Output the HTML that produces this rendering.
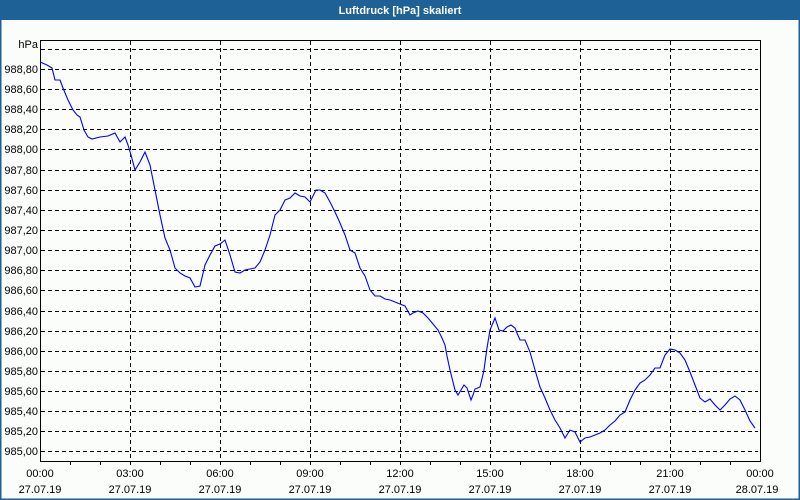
<!DOCTYPE html>
<html><head><meta charset="utf-8"><style>
html,body{margin:0;padding:0;width:800px;height:500px;overflow:hidden;background:#fbfdfb;}
svg{display:block;font-family:"Liberation Sans",Tahoma,sans-serif;}
</style></head><body>
<svg width="800" height="500" viewBox="0 0 800 500" xmlns="http://www.w3.org/2000/svg">
<rect x="0" y="0" width="800" height="500" fill="#fbfdfb"/>
<rect x="0.5" y="0.5" width="799" height="499" fill="none" stroke="#1e6196" stroke-width="2"/>
<rect x="0" y="0" width="800" height="20" fill="#1e6196"/>
<text x="400" y="14" fill="#fff" font-size="11" font-weight="bold" text-anchor="middle">Luftdruck [hPa] skaliert</text>
<g stroke="#000" stroke-width="1" stroke-dasharray="4,3" shape-rendering="crispEdges">
<line x1="41" y1="49.5" x2="758" y2="49.5"/>
<line x1="41" y1="69.5" x2="758" y2="69.5"/>
<line x1="41" y1="89.5" x2="758" y2="89.5"/>
<line x1="41" y1="109.5" x2="758" y2="109.5"/>
<line x1="41" y1="129.5" x2="758" y2="129.5"/>
<line x1="41" y1="149.5" x2="758" y2="149.5"/>
<line x1="41" y1="170.5" x2="758" y2="170.5"/>
<line x1="41" y1="190.5" x2="758" y2="190.5"/>
<line x1="41" y1="210.5" x2="758" y2="210.5"/>
<line x1="41" y1="230.5" x2="758" y2="230.5"/>
<line x1="41" y1="250.5" x2="758" y2="250.5"/>
<line x1="41" y1="270.5" x2="758" y2="270.5"/>
<line x1="41" y1="290.5" x2="758" y2="290.5"/>
<line x1="41" y1="311.5" x2="758" y2="311.5"/>
<line x1="41" y1="331.5" x2="758" y2="331.5"/>
<line x1="41" y1="351.5" x2="758" y2="351.5"/>
<line x1="41" y1="371.5" x2="758" y2="371.5"/>
<line x1="41" y1="391.5" x2="758" y2="391.5"/>
<line x1="41" y1="411.5" x2="758" y2="411.5"/>
<line x1="41" y1="431.5" x2="758" y2="431.5"/>
<line x1="41" y1="451.5" x2="758" y2="451.5"/>
<line x1="130.5" y1="41" x2="130.5" y2="460"/>
<line x1="220.5" y1="41" x2="220.5" y2="460"/>
<line x1="310.5" y1="41" x2="310.5" y2="460"/>
<line x1="400.5" y1="41" x2="400.5" y2="460"/>
<line x1="490.5" y1="41" x2="490.5" y2="460"/>
<line x1="580.5" y1="41" x2="580.5" y2="460"/>
<line x1="670.5" y1="41" x2="670.5" y2="460"/>
</g>
<rect x="40.5" y="40.5" width="720" height="421" fill="none" stroke="#000" shape-rendering="crispEdges"/>
<g stroke="#000" shape-rendering="crispEdges">
<line x1="70.5" y1="461" x2="70.5" y2="465"/><line x1="100.5" y1="461" x2="100.5" y2="465"/>
<line x1="160.5" y1="461" x2="160.5" y2="465"/><line x1="190.5" y1="461" x2="190.5" y2="465"/>
<line x1="250.5" y1="461" x2="250.5" y2="465"/><line x1="280.5" y1="461" x2="280.5" y2="465"/>
<line x1="340.5" y1="461" x2="340.5" y2="465"/><line x1="370.5" y1="461" x2="370.5" y2="465"/>
<line x1="430.5" y1="461" x2="430.5" y2="465"/><line x1="460.5" y1="461" x2="460.5" y2="465"/>
<line x1="520.5" y1="461" x2="520.5" y2="465"/><line x1="550.5" y1="461" x2="550.5" y2="465"/>
<line x1="610.5" y1="461" x2="610.5" y2="465"/><line x1="640.5" y1="461" x2="640.5" y2="465"/>
<line x1="700.5" y1="461" x2="700.5" y2="465"/><line x1="730.5" y1="461" x2="730.5" y2="465"/>
<line x1="130.5" y1="461" x2="130.5" y2="465"/><line x1="220.5" y1="461" x2="220.5" y2="465"/>
<line x1="310.5" y1="461" x2="310.5" y2="465"/><line x1="400.5" y1="461" x2="400.5" y2="465"/>
<line x1="490.5" y1="461" x2="490.5" y2="465"/><line x1="580.5" y1="461" x2="580.5" y2="465"/>
<line x1="670.5" y1="461" x2="670.5" y2="465"/>
</g>
<polyline fill="none" stroke="#0000ff" stroke-width="1.1" points="40,62 47,65 52,68 55,80 60,80 63,88 68,100 73,110 77,115 80,117 84,130 88,137 92,139 100,137 108,136 115,133 120,142 125,137 128,145 131,155 135,170 140,162 145,152 150,165 155,190 160,215 165,238 170,250 175,268 180,273 185,276 190,278 195,287 200,286 205,265 210,255 215,246 220,244 225,240 230,255 235,272 240,273 245,270 255,268 260,262 265,250 270,235 275,215 280,210 285,200 290,198 295,193 300,196 305,197 310,202 316,190 320,190 325,193 330,202 335,212 340,223 345,235 350,250 355,253 360,268 365,276 370,290 375,296 380,296 385,299 390,300 395,302 400,304 405,306 410,315 413,313 418,311 423,313 428,318 433,324 438,330 442,338 445,345 447,356 450,370 453,382 455,390 458,395 461,390 464,385 467,388 471,400 473,395 475,389 480,387 484,370 487,348 490,330 495,318 499,330 503,331 507,327 511,325 515,328 517,333 520,340 525,340 530,352 535,370 540,387 545,398 550,410 555,420 560,428 565,438 570,430 575,432 580,442 585,438 590,437 600,433 605,430 610,425 615,421 620,415 625,412 630,400 635,390 640,383 645,380 650,375 655,368 660,368 665,355 670,349 675,350 680,353 685,360 690,372 695,385 700,398 705,402 710,399 715,405 720,410 725,405 730,399 735,396 740,400 745,410 750,421 755,428"/>
<g font-size="11" fill="#000" text-anchor="end">
<text x="38" y="48">hPa</text>
<text x="38" y="73">988,80</text><text x="38" y="93">988,60</text><text x="38" y="113">988,40</text>
<text x="38" y="133">988,20</text><text x="38" y="153">988,00</text><text x="38" y="174">987,80</text>
<text x="38" y="194">987,60</text><text x="38" y="214">987,40</text><text x="38" y="234">987,20</text>
<text x="38" y="254">987,00</text><text x="38" y="274">986,80</text><text x="38" y="294">986,60</text>
<text x="38" y="315">986,40</text><text x="38" y="335">986,20</text><text x="38" y="355">986,00</text>
<text x="38" y="375">985,80</text><text x="38" y="395">985,60</text><text x="38" y="415">985,40</text>
<text x="38" y="435">985,20</text><text x="38" y="455">985,00</text>
</g>
<g font-size="11" fill="#000" text-anchor="middle">
<text x="40" y="477">00:00</text><text x="40" y="493">27.07.19</text>
<text x="130" y="477">03:00</text><text x="130" y="493">27.07.19</text>
<text x="220" y="477">06:00</text><text x="220" y="493">27.07.19</text>
<text x="310" y="477">09:00</text><text x="310" y="493">27.07.19</text>
<text x="400" y="477">12:00</text><text x="400" y="493">27.07.19</text>
<text x="490" y="477">15:00</text><text x="490" y="493">27.07.19</text>
<text x="580" y="477">18:00</text><text x="580" y="493">27.07.19</text>
<text x="670" y="477">21:00</text><text x="670" y="493">27.07.19</text>
<text x="760" y="477">00:00</text><text x="757" y="493">28.07.19</text>
</g>
</svg>
</body></html>
